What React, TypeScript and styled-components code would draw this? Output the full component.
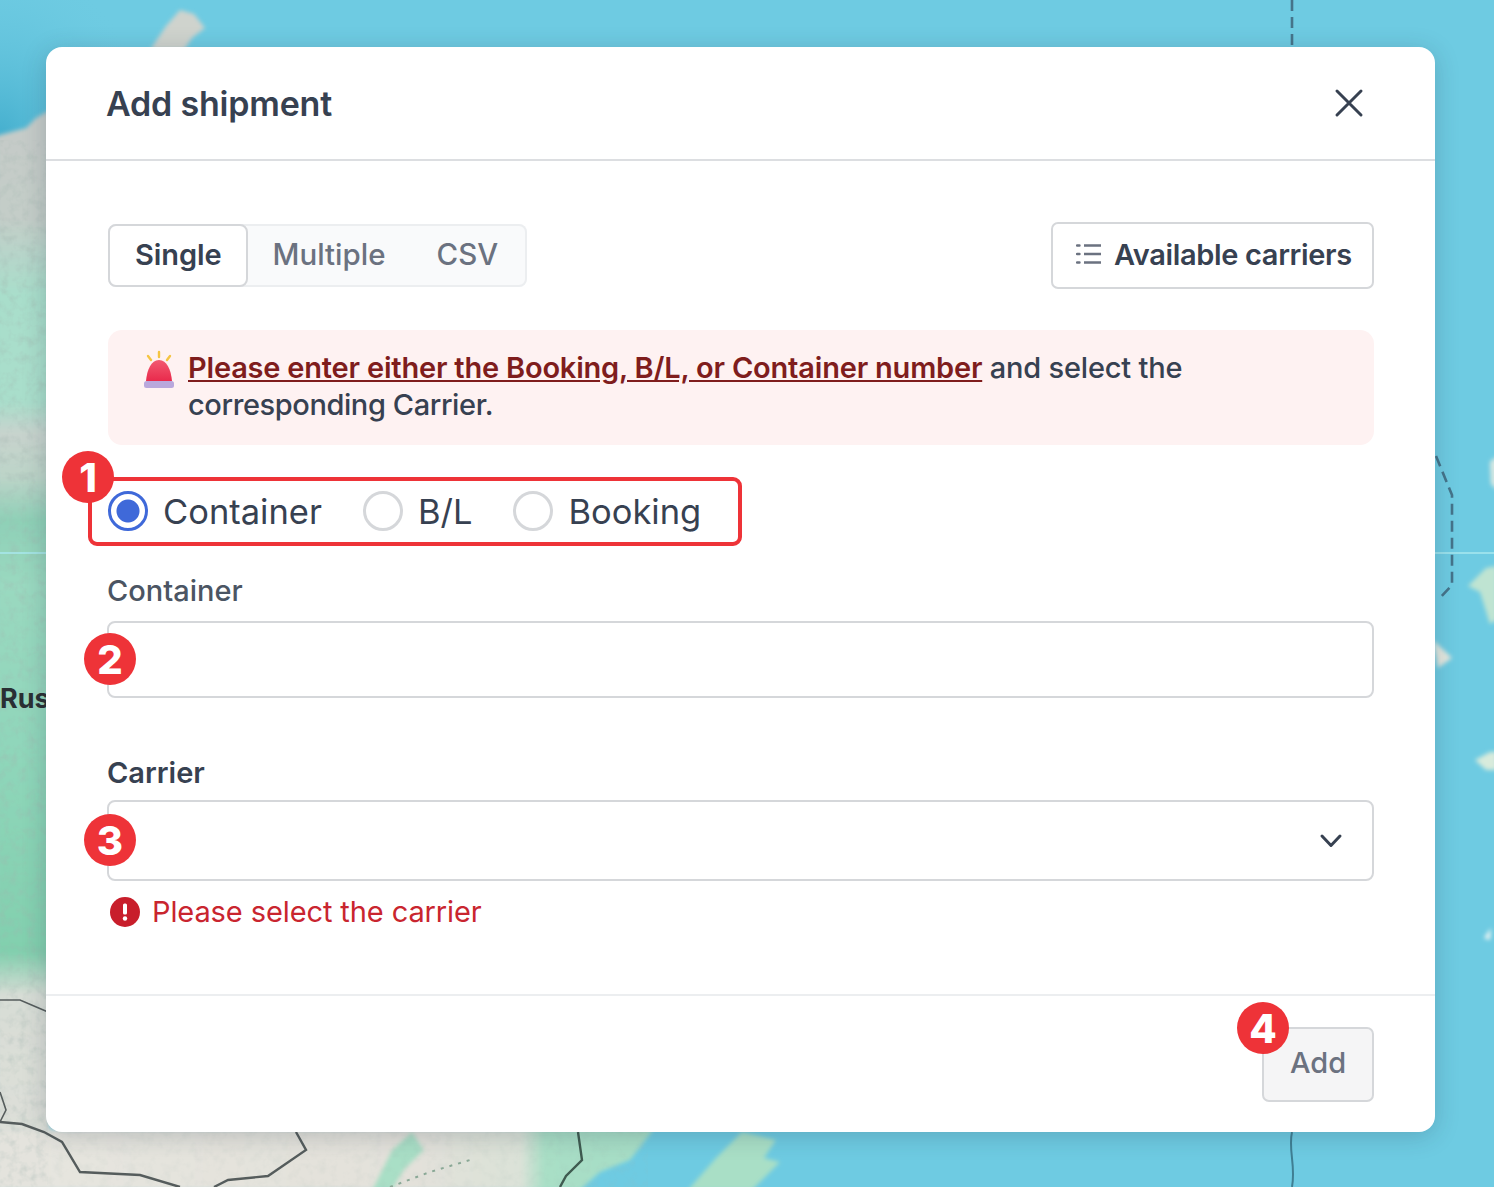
import React from 'react'
import styled, { createGlobalStyle } from 'styled-components'

const GlobalStyle = createGlobalStyle`
  html, body {
    margin: 0;
    padding: 0;
    background: #6ecbe2;
  }
  * {
    box-sizing: border-box;
  }
`

const MapBackdrop = () => (
  <MapSvg viewBox="0 0 1494 1187" preserveAspectRatio="none">
    <defs>
      <filter id="soft" x="-10%" y="-10%" width="120%" height="120%">
        <feGaussianBlur stdDeviation="2.2" />
      </filter>
      <filter id="speckle" x="0" y="0" width="100%" height="100%">
        <feTurbulence type="fractalNoise" baseFrequency="0.11" numOctaves="3" seed="4" />
        <feColorMatrix values="0 0 0 0 0.35  0 0 0 0 0.45  0 0 0 0 0.42  0 0 0 1.4 -0.62" />
        <feComposite in2="SourceAlpha" operator="in" />
        <feGaussianBlur stdDeviation="0.7" />
      </filter>
      <linearGradient id="leftLand" x1="0" y1="0" x2="0" y2="1">
        <stop offset="0" stopColor="#c6cbc8" />
        <stop offset="0.1" stopColor="#c4cdc8" />
        <stop offset="0.17" stopColor="#a9decb" />
        <stop offset="0.27" stopColor="#a9decb" />
        <stop offset="0.3" stopColor="#c8d3cd" />
        <stop offset="0.34" stopColor="#bcd4c8" />
        <stop offset="0.38" stopColor="#8fd0b7" />
        <stop offset="0.44" stopColor="#9ad9c0" />
        <stop offset="0.6" stopColor="#8fd6ba" />
        <stop offset="0.78" stopColor="#82cfae" />
        <stop offset="0.82" stopColor="#d8ddd6" />
        <stop offset="1" stopColor="#dfe0da" />
      </linearGradient>
      <linearGradient id="bottomLand" x1="0" y1="0" x2="1" y2="0">
        <stop offset="0" stopColor="#e6e5df" />
        <stop offset="0.6" stopColor="#e3e1da" />
        <stop offset="0.78" stopColor="#dbe2d8" />
        <stop offset="0.82" stopColor="#a9dfc6" />
        <stop offset="1" stopColor="#a6dec6" />
      </linearGradient>
      <radialGradient id="topSea" cx="0" cy="0.75" r="1">
        <stop offset="0" stopColor="#45afce" />
        <stop offset="1" stopColor="#6ecbe2" stopOpacity="0" />
      </radialGradient>
    </defs>
    <rect x="0" y="0" width="150" height="180" fill="url(#topSea)" />
    <g filter="url(#soft)">
      <path d="M-4 136 L26 128 L36 118 L50 110 V1190 H-4 Z" fill="url(#leftLand)" />
      <path d="M-4 1132 H50 V1190 H-4 Z" fill="#e4e3dd" />
      <path d="M48 1129 H654 L630 1160 L600 1172 L580 1190 H48 Z" fill="url(#bottomLand)" />
      <path d="M372 1190 L392 1150 L412 1132 L424 1150 L404 1170 L392 1190 Z" fill="#a9dfc6" />
      <path d="M688 1190 L716 1158 L742 1132 L776 1140 L764 1158 L780 1162 L752 1190 Z" fill="#a9dfc6" />
      <path d="M150 50 L166 26 L180 10 L194 14 L205 28 L192 38 L184 50 Z" fill="#cfd3cd" />
      <path d="M1433 640 L1452 658 L1438 668 Z" fill="#e5e8df" />
      <path d="M1468 586 L1486 568 L1497 566 V620 L1490 624 L1480 592 Z" fill="#bfe4d2" />
      <path d="M1490 462 L1497 456 V490 L1491 484 Z" fill="#dbe9e2" />
      <path d="M1475 760 L1490 752 L1497 752 V770 L1486 770 Z" fill="#d8ebdc" />
      <path d="M1484 938 L1491 928 L1490 940 Z" fill="#f2f7f4" />
    </g>
    <rect x="0" y="140" width="48" height="1047" filter="url(#speckle)" opacity="0.5" />
    <rect x="48" y="1132" width="600" height="55" filter="url(#speckle)" opacity="0.18" />
    <path d="M0 553 H1494" stroke="#a9e8ef" strokeWidth="1.5" />
    <g fill="none" stroke="#555c5c" strokeWidth="2.4">
      <path d="M0 1122 L22 1124 L44 1132 L62 1142 L80 1172 L140 1175 L180 1187" />
      <path d="M0 1000 L20 1000 L48 1012" strokeWidth="1.6" />
      <path d="M0 1092 L6 1110 L0 1122" strokeWidth="1.6" />
      <path d="M296 1132 L306 1150 L268 1176 L228 1180 L214 1187" />
    </g>
    <path d="M578 1132 L582 1160 L566 1176 L560 1187" fill="none" stroke="#3f5b50" strokeWidth="2.4" />
    <path d="M390 1187 L430 1172 L470 1160" fill="none" stroke="#8aa896" strokeWidth="2" strokeDasharray="3 6" />
    <g fill="none" stroke="#45748a" strokeWidth="2.6" strokeDasharray="11 6">
      <path d="M1292 0 V47" />
      <path d="M1436 456 L1452 495 V585 L1438 600" />
    </g>
    <path d="M1292 1132 C1288 1150 1296 1165 1292 1187" fill="none" stroke="#3f7f93" strokeWidth="2" />
    <MapLabel x="0" y="708">Rus</MapLabel>
  </MapSvg>
)

const AlertIcon = () => (
  <svg width="34" height="40" viewBox="0 0 34 40">
    <defs>
      <linearGradient id="dome" x1="0" y1="0" x2="0" y2="1">
        <stop offset="0" stopColor="#f25a70" />
        <stop offset="1" stopColor="#e92a4c" />
      </linearGradient>
    </defs>
    <g stroke="#f5c542" strokeWidth="2.4" strokeLinecap="round">
      <path d="M17 2 V7" />
      <path d="M6 6 L9 10" />
      <path d="M28 6 L25 10" />
    </g>
    <path d="M4 31 C5 20 9 10 17 10 C25 10 29 20 30 31 Z" fill="url(#dome)" />
    <rect x="2" y="31" width="30" height="7" rx="2.5" fill="#b9a8dc" />
  </svg>
)

const ListIcon = () => (
  <svg width="26" height="24" viewBox="0 0 26 24" fill="none" stroke="#6b7280" strokeWidth="2.4">
    <path d="M8 3.5 H25 M8 12 H25 M8 20.5 H25" />
    <path d="M1 3.5 H3.5 M1 12 H3.5 M1 20.5 H3.5" strokeLinecap="round" />
  </svg>
)

const CloseIcon = () => (
  <svg width="30" height="30" viewBox="0 0 30 30" fill="none" stroke="#374151" strokeWidth="3" strokeLinecap="round">
    <path d="M3 3 L27 27 M27 3 L3 27" />
  </svg>
)

const ChevronIcon = () => (
  <svg width="24" height="16" viewBox="0 0 24 16" fill="none" stroke="#374151" strokeWidth="3" strokeLinecap="round" strokeLinejoin="round">
    <path d="M3 3 L12 12.5 L21 3" />
  </svg>
)

const ErrorIcon = () => (
  <svg width="30" height="30" viewBox="0 0 30 30">
    <circle cx="15" cy="15" r="15" fill="#c81e2b" />
    <rect x="13" y="6.5" width="4" height="11" rx="1.5" fill="#fff" />
    <circle cx="15" cy="21.5" r="2.2" fill="#fff" />
  </svg>
)

export default function App() {
  return (
    <Page>
      <GlobalStyle />
      <MapBackdrop />
      <Modal>
        <Header>
          <Title>Add shipment</Title>
          <CloseButton aria-label="Close">
            <CloseIcon />
          </CloseButton>
        </Header>
        <Body>
          <Toolbar>
            <Tabs>
              <Tab $active>Single</Tab>
              <Tab>Multiple</Tab>
              <Tab>CSV</Tab>
            </Tabs>
            <CarriersButton>
              <ListIcon />
              Available carriers
            </CarriersButton>
          </Toolbar>
          <Alert>
            <AlertIconWrap>
              <AlertIcon />
            </AlertIconWrap>
            <AlertText>
              <AlertLink>Please enter either the Booking, B/L, or Container number</AlertLink> and select the
              <br />
              <AlertTail>corresponding Carrier.</AlertTail>
            </AlertText>
          </Alert>
          <RadioRow>
            <Highlight />
            <Badge $top={-40} $left={-46}>1</Badge>
            <RadioItem>
              <Radio $checked />
              Container
            </RadioItem>
            <RadioItem>
              <Radio />
              B/L
            </RadioItem>
            <RadioItem>
              <Radio />
              Booking
            </RadioItem>
          </RadioRow>
          <Field>
            <FieldLabel>Container</FieldLabel>
            <InputBox $height={77}>
              <Badge $top={10} $left={-25}>2</Badge>
            </InputBox>
          </Field>
          <CarrierField>
            <CarrierLabel>Carrier</CarrierLabel>
            <InputBox $height={81}>
              <Badge $top={12} $left={-25}>3</Badge>
              <ChevronIcon />
            </InputBox>
            <ErrorRow>
              <ErrorIcon />
              Please select the carrier
            </ErrorRow>
          </CarrierField>
        </Body>
        <Footer>
          <AddButton>
            <Badge $top={-27} $left={-27}>4</Badge>
            Add
          </AddButton>
        </Footer>
      </Modal>
    </Page>
  )
}

const Page = styled.div`
  position: relative;
  width: 1494px;
  height: 1187px;
  padding: 47px 59px 55px 46px;
  overflow: hidden;
  background: #6ecbe2;
  font-family: Inter, 'Liberation Sans', sans-serif;
`

const MapSvg = styled.svg`
  position: absolute;
  top: 0;
  left: 0;
  width: 1494px;
  height: 1187px;
`

const MapLabel = styled.text`
  font-family: Inter, sans-serif;
  font-size: 27px;
  font-weight: 700;
  fill: #2a2f33;
`

const Modal = styled.div`
  position: relative;
  display: flex;
  flex-direction: column;
  width: 1389px;
  height: 1085px;
  background: #fff;
  border-radius: 16px;
  box-shadow: 0 4px 24px rgba(30, 50, 70, 0.22);
`

const Header = styled.div`
  display: flex;
  align-items: center;
  justify-content: space-between;
  height: 114px;
  padding: 0 71px 0 60px;
  border-bottom: 2px solid #dcdee1;
`

const Title = styled.h2`
  margin: 0;
  font-size: 34px;
  font-weight: 600;
  letter-spacing: -0.2px;
  color: #374151;
`

const CloseButton = styled.button`
  display: flex;
  padding: 0;
  border: 0;
  background: none;
`

const Body = styled.div`
  flex: 1;
  padding: 61px 61px 0;
`

const Toolbar = styled.div`
  display: flex;
  align-items: center;
  justify-content: space-between;
  height: 67px;
  padding-left: 1px;
`

const Tabs = styled.div`
  display: flex;
  height: 63px;
  padding-right: 2px;
  background: #f9fafb;
  box-shadow: inset 0 0 0 2px #eceef0;
  border-radius: 8px;
`

const Tab = styled.div<{ $active?: boolean }>`
  display: flex;
  align-items: center;
  padding: ${({ $active }) => ($active ? '0 25px 3px' : '0 25px 3px 22px')};
  font-size: ${({ $active }) => ($active ? '29px' : '29.5px')};
  font-weight: ${({ $active }) => ($active ? 600 : 500)};
  letter-spacing: ${({ $active }) => ($active ? '-0.1px' : '0')};
  color: ${({ $active }) => ($active ? '#374151' : '#6b7280')};
  background: ${({ $active }) => ($active ? '#fff' : 'transparent')};
  border: ${({ $active }) => ($active ? '2px solid #d5d7da' : '2px solid transparent')};
  border-radius: 8px;
`

const CarriersButton = styled.button`
  display: flex;
  align-items: center;
  gap: 12px;
  height: 67px;
  width: 323px;
  padding: 0 0 3px 23px;
  font-family: inherit;
  font-size: 29px;
  font-weight: 600;
  letter-spacing: -0.35px;
  color: #374151;
  background: #fff;
  border: 2px solid #d5d7da;
  border-radius: 7px;
`

const Alert = styled.div`
  display: flex;
  gap: 12px;
  margin: 41px 0 0 1px;
  height: 115px;
  padding: 19px 34px;
  background: #fef2f2;
  border-radius: 14px;
`

const AlertIconWrap = styled.div`
  display: flex;
  padding-top: 1px;
`

const AlertText = styled.div`
  font-size: 29px;
  line-height: 37px;
  font-weight: 500;
  letter-spacing: -0.2px;
  color: #374151;
`

const AlertLink = styled.span`
  font-weight: 600;
  color: #7f1d1d;
  text-decoration: underline;
`

const AlertTail = styled.span`
  letter-spacing: -0.4px;
`

const RadioRow = styled.div`
  position: relative;
  display: flex;
  gap: 41px;
  align-items: center;
  margin: 46px 0 0 1px;
  height: 40px;
`

const Highlight = styled.div`
  position: absolute;
  top: -14px;
  left: -20px;
  width: 654px;
  height: 69px;
  border: 4px solid #ee3338;
  border-radius: 9px;
`

const Badge = styled.span<{ $top: number; $left: number }>`
  position: absolute;
  top: ${({ $top }) => $top}px;
  left: ${({ $left }) => $left}px;
  z-index: 2;
  display: flex;
  align-items: center;
  justify-content: center;
  width: 52px;
  height: 52px;
  border-radius: 50%;
  background: #ee3338;
  color: #fff;
  font-size: 40px;
  font-weight: 800;
`

const RadioItem = styled.label`
  display: flex;
  align-items: center;
  gap: 15px;
  font-size: 34.5px;
  color: #374151;
`

const Radio = styled.span<{ $checked?: boolean }>`
  width: 40px;
  height: 40px;
  border-radius: 50%;
  border: 3px solid ${({ $checked }) => ($checked ? '#3f69d9' : '#d5d7da')};
  background: ${({ $checked }) =>
    $checked ? 'radial-gradient(circle, #3f69d9 0 11px, #fff 12px)' : '#fff'};
`

const Field = styled.div`
  margin-top: 42px;
`

const FieldLabel = styled.div`
  height: 48px;
  font-size: 29px;
  line-height: 36px;
  font-weight: 500;
  color: #4b5563;
`

const InputBox = styled.div<{ $height: number }>`
  position: relative;
  display: flex;
  align-items: center;
  justify-content: flex-end;
  height: ${({ $height }) => $height}px;
  padding-right: 29px;
  background: #fff;
  border: 2px solid #d5d7da;
  border-radius: 8px;
`

const CarrierField = styled.div`
  margin-top: 56px;
`

const CarrierLabel = styled.div`
  height: 46px;
  padding-top: 1px;
  font-size: 29px;
  line-height: 36px;
  font-weight: 600;
  color: #374151;
`

const ErrorRow = styled.div`
  display: flex;
  align-items: center;
  gap: 12px;
  margin: 15px 0 0 3px;
  font-size: 29px;
  line-height: 32px;
  letter-spacing: -0.1px;
  color: #c9252f;
`

const Footer = styled.div`
  display: flex;
  justify-content: flex-end;
  height: 138px;
  padding: 31px 61px 0 0;
  border-top: 2px solid #eceef0;
`

const AddButton = styled.button`
  position: relative;
  width: 112px;
  height: 75px;
  padding: 0 0 4px;
  font-family: inherit;
  font-size: 29px;
  font-weight: 500;
  color: #6b7280;
  background: #f5f5f6;
  border: 2px solid #d5d7da;
  border-radius: 7px;
`
